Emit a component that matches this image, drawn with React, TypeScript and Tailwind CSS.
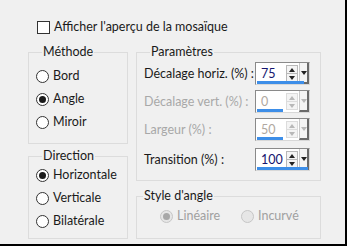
import React from 'react';

const font = { fontFamily: 'Lato, "Noto Sans", sans-serif' };

const Radio: React.FC<{ label: string; checked?: boolean; disabled?: boolean }> = ({ label, checked, disabled }) => (
  <div className={`flex items-center h-[16px] ${disabled ? 'text-[#a0a0a0]' : 'text-[#1a1a1a]'}`}>
    <span
      className={`w-[13px] h-[13px] rounded-full border flex items-center justify-center ${
        disabled ? 'border-[#c6c6c6] bg-[#e6e6e6]' : 'border-[#333] bg-white'
      }`}
    >
      {checked && <span className={`w-[7px] h-[7px] rounded-full ${disabled ? 'bg-[#a8a8a8]' : 'bg-[#1a1a1a]'}`} />}
    </span>
    <span className="ml-[4px]">{label}</span>
  </div>
);

const Spinner: React.FC<{ value: string; bar: number; disabled?: boolean }> = ({ value, bar, disabled }) => (
  <div className="relative w-[55px] h-[23px] bg-white border border-[#8a8a8a] border-r-[#d8d8d8] border-b-[#d8d8d8] flex items-center">
    <span className={`ml-[5px] flex-1 ${disabled ? 'text-[#b0a8a0]' : 'text-[#14146e]'}`}>{value}</span>
    <div className={`w-[12px] h-[17px] mr-[1px] flex flex-col border ${disabled ? 'border-[#dcdcdc]' : 'border-[#b8b8b8]'} bg-[#f4f4f4]`}>
      <div className={`flex-1 flex items-center justify-center border-b ${disabled ? 'border-[#dcdcdc]' : 'border-[#b8b8b8]'}`}>
        <span className={`w-0 h-0 border-l-[3px] border-r-[3px] border-b-[4px] border-l-transparent border-r-transparent ${disabled ? 'border-b-[#b8b8b8]' : 'border-b-[#222]'}`} />
      </div>
      <div className="flex-1 flex items-center justify-center">
        <span className={`w-0 h-0 border-l-[3px] border-r-[3px] border-t-[4px] border-l-transparent border-r-transparent ${disabled ? 'border-t-[#b8b8b8]' : 'border-t-[#222]'}`} />
      </div>
    </div>
    <div className="w-[10px] h-[21px] flex items-center justify-center border-l border-[#c8c8c8] border-r-2 border-b-2 border-r-[#6a6a6a] border-b-[#6a6a6a] bg-[#f4f4f4]">
      <span className={`w-0 h-0 border-l-[3px] border-r-[3px] border-t-[4px] border-l-transparent border-r-transparent ${disabled ? 'border-t-[#b8b8b8]' : 'border-t-[#222]'}`} />
    </div>
    <div className="absolute left-[1px] bottom-0 h-[3px] bg-[#3d8ee8]" style={{ width: bar }} />
  </div>
);

const Row: React.FC<{ label: string; value: string; bar: number; disabled?: boolean; className?: string }> = ({ label, value, bar, disabled, className }) => (
  <div className={`flex items-center justify-between h-[23px] ${className ?? ''}`}>
    <span className={`whitespace-nowrap ${disabled ? 'text-[#a8a8a8]' : 'text-[#1a1a1a]'}`}>{label}</span>
    <Spinner value={value} bar={bar} disabled={disabled} />
  </div>
);

export default function App() {
  return (
    <div
      className="w-[347px] h-[246px] bg-[#f0f0f0] border-r-2 border-b-2 border-black text-[12.5px] leading-[16px] text-[#1a1a1a] overflow-hidden"
      style={font}
    >
      <div className="flex items-center pl-[37px] pt-[19px] h-[35px]">
        <span className="w-[13px] h-[13px] border border-[#333] bg-white" />
        <span className="ml-[4px]">Afficher l'aperçu de la mosaïque</span>
      </div>

      <div className="flex pl-[28px] pt-[9px] gap-[8px]">
        <div className="flex flex-col w-[100px] gap-[4px]">
          <fieldset className="border border-[#dcdcdc] h-[100px] pl-[7px]">
            <legend className="px-[1px] ml-[6px]">Méthode</legend>
            <div className="flex flex-col gap-[7px] pt-[8px]">
              <Radio label="Bord" />
              <Radio label="Angle" checked />
              <Radio label="Miroir" />
            </div>
          </fieldset>
          <fieldset className="border border-[#dcdcdc] h-[91px] pl-[7px]">
            <legend className="px-[1px] ml-[6px]">Direction</legend>
            <div className="flex flex-col gap-[7px] pt-[3px]">
              <Radio label="Horizontale" checked />
              <Radio label="Verticale" />
              <Radio label="Bilatérale" />
            </div>
          </fieldset>
        </div>

        <div className="flex flex-col w-[185px] gap-[7px]">
          <fieldset className="border border-[#dcdcdc] h-[137px] pl-[7px] pr-[10px]">
            <legend className="px-[1px] ml-[6px]">Paramètres</legend>
            <div className="flex flex-col gap-[5px] pt-[2px]">
              <Row label="Décalage horiz. (%) :" value="75" bar={47} />
              <Row label="Décalage vert. (%) :" value="0" bar={26} disabled />
              <Row label="Largeur (%) :" value="50" bar={26} disabled />
              <Row label="Transition (%) :" value="100" bar={51} className="mt-[2px]" />
            </div>
          </fieldset>
          <fieldset className="border border-[#dcdcdc] h-[51px]">
            <legend className="px-[1px] ml-[6px]">Style d'angle</legend>
            <div className="flex pt-[4px] pl-[23px]">
              <div className="w-[81px]">
                <Radio label="Linéaire" checked disabled />
              </div>
              <Radio label="Incurvé" disabled />
            </div>
          </fieldset>
        </div>
      </div>
    </div>
  );
}
